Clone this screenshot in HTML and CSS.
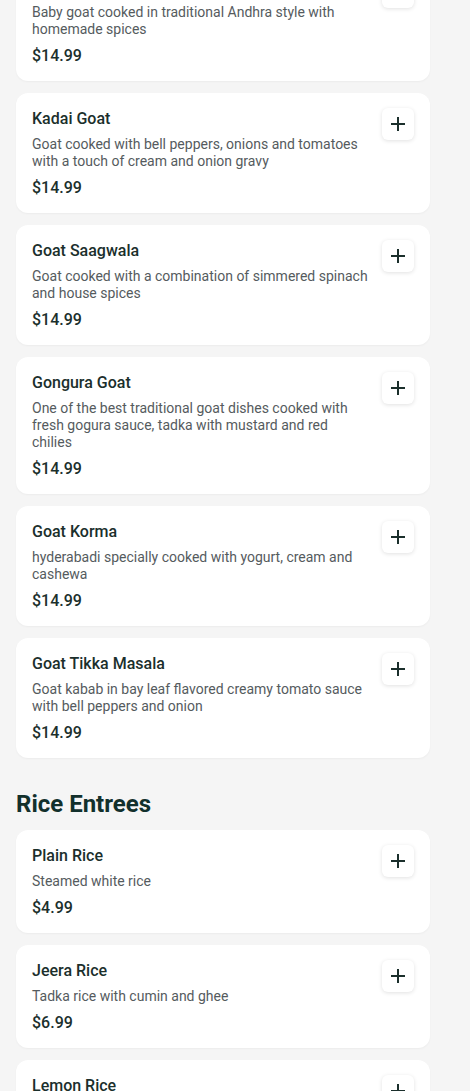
FILE: index.html
```html
<!DOCTYPE html>
<html lang="en">
<head>
    <meta charset="UTF-8">
    <meta name="viewport" content="width=device-width, initial-scale=1.0">
    <title>Menu</title>
    <link rel="stylesheet" href="styles.css">
</head>
<body>
    <main class="menu">
        <section class="section section-scrolled">
            <div class="item-list">
                <div class="item-card">
                    <div class="item-info">
                        <h3 class="item-name">Andhra Goat Curry</h3>
                        <p class="item-desc">Baby goat cooked in traditional Andhra style with homemade spices</p>
                        <p class="item-price">$14.99</p>
                    </div>
                    <button class="add-btn" aria-label="Add"><svg viewBox="0 0 16 16"><path d="M8 1v14M1 8h14"/></svg></button>
                </div>
                <div class="item-card">
                    <div class="item-info">
                        <h3 class="item-name">Kadai Goat</h3>
                        <p class="item-desc">Goat cooked with bell peppers, onions and tomatoes with a touch of cream and onion gravy</p>
                        <p class="item-price">$14.99</p>
                    </div>
                    <button class="add-btn" aria-label="Add"><svg viewBox="0 0 16 16"><path d="M8 1v14M1 8h14"/></svg></button>
                </div>
                <div class="item-card">
                    <div class="item-info">
                        <h3 class="item-name">Goat Saagwala</h3>
                        <p class="item-desc">Goat cooked with a combination of simmered spinach and house spices</p>
                        <p class="item-price">$14.99</p>
                    </div>
                    <button class="add-btn" aria-label="Add"><svg viewBox="0 0 16 16"><path d="M8 1v14M1 8h14"/></svg></button>
                </div>
                <div class="item-card">
                    <div class="item-info">
                        <h3 class="item-name">Gongura Goat</h3>
                        <p class="item-desc">One of the best traditional goat dishes cooked with fresh gogura sauce, tadka with mustard and red chilies</p>
                        <p class="item-price">$14.99</p>
                    </div>
                    <button class="add-btn" aria-label="Add"><svg viewBox="0 0 16 16"><path d="M8 1v14M1 8h14"/></svg></button>
                </div>
                <div class="item-card">
                    <div class="item-info">
                        <h3 class="item-name">Goat Korma</h3>
                        <p class="item-desc">hyderabadi specially cooked with yogurt, cream and cashewa</p>
                        <p class="item-price">$14.99</p>
                    </div>
                    <button class="add-btn" aria-label="Add"><svg viewBox="0 0 16 16"><path d="M8 1v14M1 8h14"/></svg></button>
                </div>
                <div class="item-card">
                    <div class="item-info">
                        <h3 class="item-name">Goat Tikka Masala</h3>
                        <p class="item-desc">Goat kabab in bay leaf flavored creamy tomato sauce with bell peppers and onion</p>
                        <p class="item-price">$14.99</p>
                    </div>
                    <button class="add-btn" aria-label="Add"><svg viewBox="0 0 16 16"><path d="M8 1v14M1 8h14"/></svg></button>
                </div>
            </div>
        </section>

        <section class="section">
            <h2 class="section-title">Rice Entrees</h2>
            <div class="item-list">
                <div class="item-card">
                    <div class="item-info">
                        <h3 class="item-name">Plain Rice</h3>
                        <p class="item-desc">Steamed white rice</p>
                        <p class="item-price">$4.99</p>
                    </div>
                    <button class="add-btn" aria-label="Add"><svg viewBox="0 0 16 16"><path d="M8 1v14M1 8h14"/></svg></button>
                </div>
                <div class="item-card">
                    <div class="item-info">
                        <h3 class="item-name">Jeera Rice</h3>
                        <p class="item-desc">Tadka rice with cumin and ghee</p>
                        <p class="item-price">$6.99</p>
                    </div>
                    <button class="add-btn" aria-label="Add"><svg viewBox="0 0 16 16"><path d="M8 1v14M1 8h14"/></svg></button>
                </div>
                <div class="item-card">
                    <div class="item-info">
                        <h3 class="item-name">Lemon Rice</h3>
                        <p class="item-desc">Rice tempered with lemon, curry leaves and peanuts</p>
                        <p class="item-price">$6.99</p>
                    </div>
                    <button class="add-btn" aria-label="Add"><svg viewBox="0 0 16 16"><path d="M8 1v14M1 8h14"/></svg></button>
                </div>
            </div>
        </section>
    </main>
</body>
</html>
```

FILE: styles.css
```css
body {
    margin: 0;
    background: #f5f5f5;
    font-family: Roboto, 'Liberation Sans', Arial, sans-serif;
    color: #1b2f2c;
}
.menu {
    max-width: 414px;
    padding: 0 16px 40px;
}
/* page is shown scrolled part way into the goat section */
.section-scrolled {
    margin-top: -39px;
}
.section + .section {
    margin-top: 32px;
}
.section-title {
    margin: 0 0 12px;
    font-size: 24px;
    line-height: 28px;
    font-weight: 700;
    color: #12302c;
}
.item-list {
    display: flex;
    flex-direction: column;
    gap: 12px;
}
.item-card {
    display: flex;
    align-items: flex-start;
    gap: 12px;
    padding: 16px 16px 15px;
    background: #fff;
    border-radius: 12px;
    box-shadow: 0 1px 2px rgba(0, 0, 0, 0.04);
}
.item-info {
    flex: 1;
    min-width: 0;
}
.item-name {
    margin: 0;
    font-size: 16px;
    line-height: 20px;
    font-weight: 500;
    color: #1b2f2c;
}
.item-desc {
    margin: 7px 0 0;
    font-size: 14px;
    line-height: 17px;
    color: #555b5e;
}
.item-price {
    margin: 8px 0 0;
    font-size: 16px;
    line-height: 20px;
    font-weight: 500;
    color: #1b2f2c;
}
.add-btn {
    flex: none;
    width: 32px;
    height: 32px;
    margin-top: -1px;
    padding: 0;
    display: flex;
    align-items: center;
    justify-content: center;
    border: none;
    border-radius: 6px;
    background: #fff;
    box-shadow: 0 1px 4px rgba(0, 0, 0, 0.12);
    cursor: pointer;
}
.add-btn svg {
    width: 16px;
    height: 16px;
    stroke: #1b2f2c;
    stroke-width: 2;
    fill: none;
}
```
